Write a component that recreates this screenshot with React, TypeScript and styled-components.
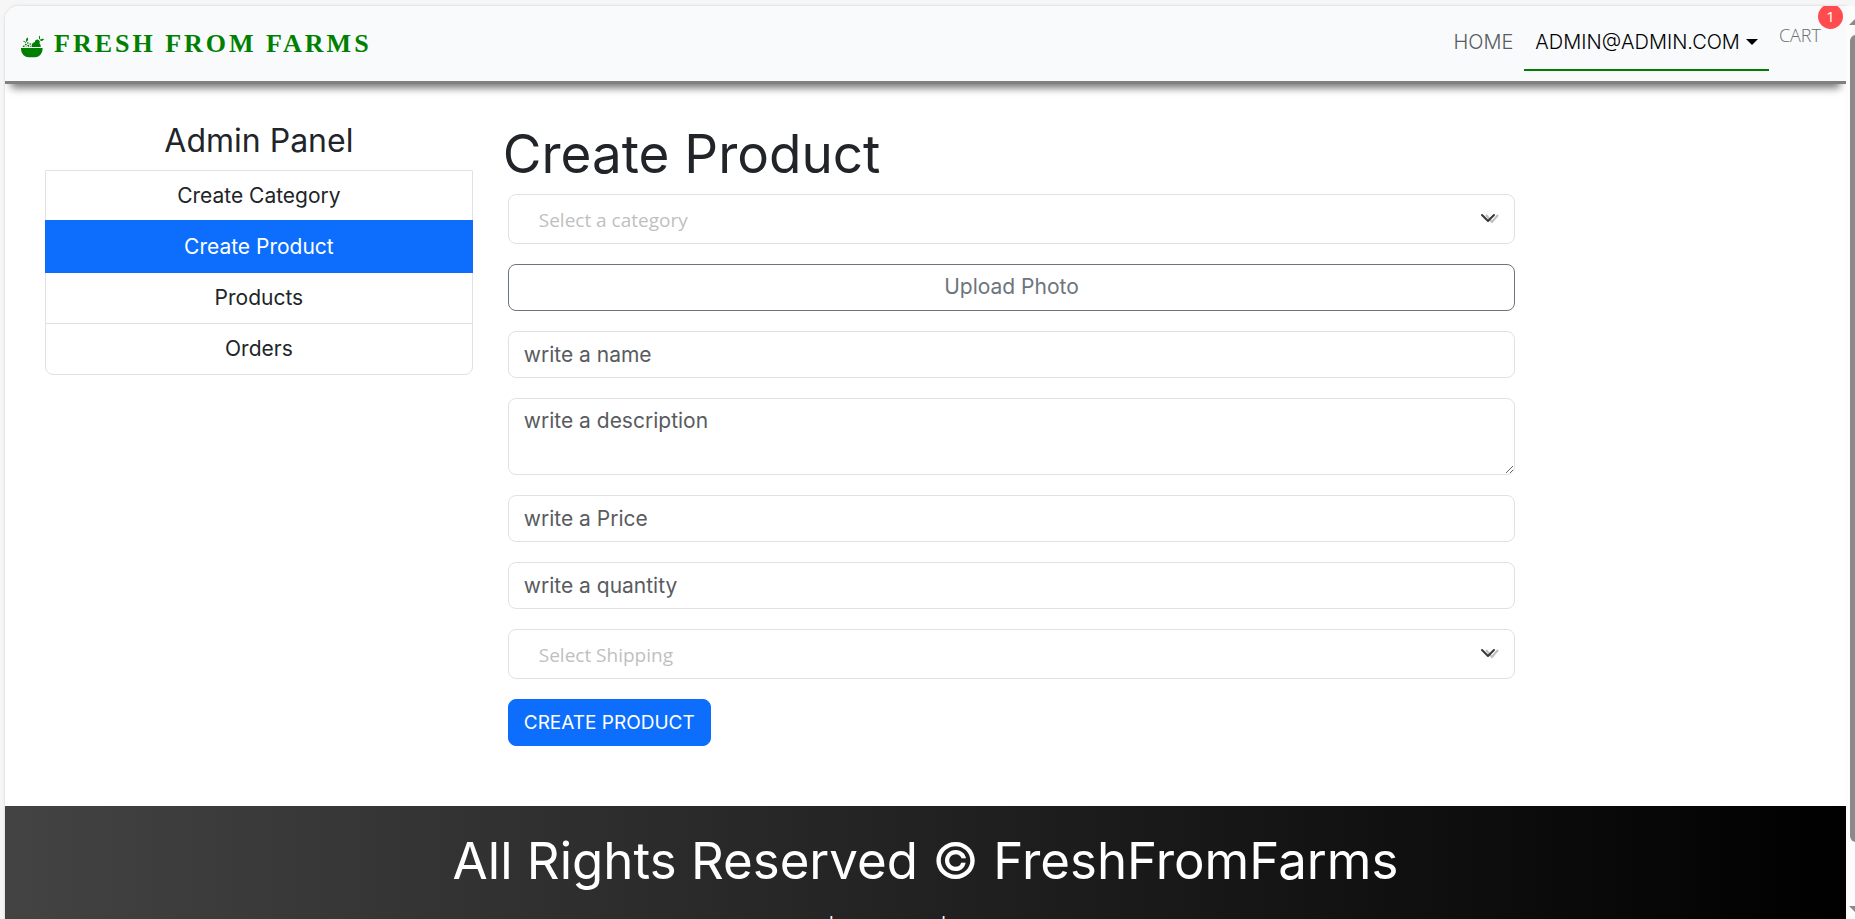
import React from 'react';
import styled, { createGlobalStyle } from 'styled-components';
import { GiFruitBowl } from 'react-icons/gi';

const GlobalStyle = createGlobalStyle`
  *, *::before, *::after { box-sizing: border-box; }
  html, body, #root { height: 100%; }
  body {
    margin: 0;
    overflow: hidden;
    background: #f6f6f6;
    color: #212529;
    font: 400 21px/30px Inter, "Open Sans", sans-serif;
  }
  h1, h4, p, ul { margin: 0; padding: 0; font-weight: 400; }
  a { color: inherit; text-decoration: none; }
`;

const Frame = styled.div`
  display: flex;
  height: 100%;
  padding: 6px 0 0 5px;
`;

const Viewport = styled.div`
  flex: 1;
  min-width: 0;
  overflow: hidden;
  background: #fff;
  border-radius: 14px 0 0 0;
  box-shadow: 0 0 2px 1px #e2e2e2;
`;

const ScrollTrack = styled.div`
  width: 9px;
  display: flex;
  flex-direction: column;
  overflow: hidden;
  background: #fcfcfc;
  position: relative;
`;

const ScrollArrow = styled.svg`
  display: block;
  width: 14px;
  height: 8px;
  margin: 12px 0 5px 3px;
  flex: none;
`;

const ScrollThumb = styled.div`
  flex: 0 0 calc(100% - 106px);
  width: 12px;
  margin: 4px 0 auto 4px;
  border-radius: 6px;
  background: #8a8a8a;
`;

const NavBar = styled.nav`
  display: flex;
  align-items: center;
  justify-content: space-between;
  height: 78px;
  padding: 0 25px 0 15px;
  background: #f8fafc;
  border-bottom: 3px solid #808080;
  box-shadow: 0 10px 8px -6px #777;
  position: relative;
`;

const Brand = styled.a`
  display: flex;
  align-items: center;
  gap: 9px;
  color: #008000;
  font: 700 26px/40px "Liberation Serif", serif;
  letter-spacing: 3px;
  & > svg { margin-top: 5px; }
`;

const NavLinks = styled.ul`
  display: flex;
  align-items: flex-start;
  height: 66px;
  list-style: none;
`;

const NavLink = styled.a<{ $active?: boolean }>`
  display: flex;
  align-items: center;
  gap: 6px;
  height: 60px;
  padding: 4px 11px 0;
  font-size: 20px;
  font-weight: 300;
  color: ${p => (p.$active ? '#000' : '#595b5d')};
  border-bottom: 2px solid ${p => (p.$active ? '#008000' : 'transparent')};
`;

const Caret = styled.span`
  border: 6px solid transparent;
  border-top-color: currentColor;
  border-bottom: 0;
`;

const CartLink = styled.a`
  display: block;
  position: relative;
  padding: 9px 0 0 10px;
  font: 300 18px/30px "Open Sans", sans-serif;
  color: #6c6e70;
`;

const CartBadge = styled.sup`
  position: absolute;
  top: -7px;
  right: -22px;
  width: 25px;
  height: 25px;
  border-radius: 50%;
  background: #ff4d4f;
  color: #fff;
  font: 400 15px/25px "Open Sans", sans-serif;
  text-align: center;
`;

const Main = styled.main`
  display: grid;
  grid-template-columns: 1fr 3fr;
  min-height: 722px;
  margin-right: -15px;
  padding: 38px 0 0 25px;
`;

const Side = styled.aside`
  padding: 0 15px;
  text-align: center;
`;

const PanelTitle = styled.h4`
  padding-bottom: 10px;
  font-size: 32px;
  line-height: 38px;
`;

const PanelList = styled.div`
  display: flex;
  flex-direction: column;
  border: 1px solid #dee2e6;
  border-radius: 0 0 8px 8px;
`;

const PanelItem = styled.a<{ $active?: boolean }>`
  padding: 10px 20px;
  border-top: 1px solid #dee2e6;
  &:first-child { border-top: 0; }
  ${p => p.$active && `
    margin: -1px -1px 0;
    padding: 11px 20px;
    border-color: #0d6efd;
    background: #0d6efd;
    color: #fff;
    & + a { border-top: 0; }
  `}
`;

const Content = styled.section`
  padding: 2px 15px 0;
`;

const Title = styled.h1`
  font-size: 53px;
  line-height: 60px;
  padding-bottom: 10px;
`;

const Form = styled.form`
  display: flex;
  flex-direction: column;
  align-items: flex-start;
  gap: 20px;
  width: 75%;
  margin-left: 5px;
`;

const SelectWrap = styled.div`
  display: grid;
  align-items: center;
  width: 100%;
  & > * { grid-area: 1 / 1; }
`;

const Select = styled.select`
  appearance: none;
  width: 100%;
  height: 50px;
  padding: 2px 44px 0 30px;
  border: 1px solid #dee2e6;
  border-radius: 8px;
  background: #fff;
  color: #bfbfbf;
  font: 400 19px/30px "Open Sans", sans-serif;
`;

const Chevron = styled.svg`
  justify-self: end;
  width: 20px;
  height: 14px;
  margin-right: 15px;
  pointer-events: none;
`;

const Input = styled.input`
  width: 100%;
  height: 47px;
  padding: 0 15px 1px;
  border: 1px solid #dee2e6;
  border-radius: 8px;
  background: #fff;
  font: inherit;
  &::placeholder { color: #595c5f; opacity: 1; }
`;

const TextArea = styled(Input).attrs({ as: 'textarea' })`
  display: block;
  height: 77px;
  padding: 7px 15px;
  resize: vertical;
`;

const UploadLabel = styled.label`
  display: block;
  width: 100%;
  height: 47px;
  padding: 7px 15px;
  border: 1px solid #6c757d;
  border-radius: 8px;
  color: #6c757d;
  text-align: center;
  cursor: pointer;
`;

const Submit = styled.button`
  height: 47px;
  padding: 0 15px;
  border: 1px solid #0d6efd;
  border-radius: 8px;
  background: #0d6efd;
  color: #fff;
  font: inherit;
  font-size: 19px;
`;

const Footer = styled.footer`
  padding: 25px 25px 40px;
  background: linear-gradient(90deg, #434343 0%, #000 100%);
  color: #fff;
  text-align: center;
`;

const FooterTitle = styled.h1`
  font-size: 51px;
  line-height: 60px;
`;

const FooterLinks = styled.p`
  padding-top: 22px;
  font-size: 20px;
  & > a { padding: 0 10px; }
`;

const SelectField = ({ label, name }: { label: string; name: string }) => (
  <SelectWrap>
    <Select name={name} aria-label={label} defaultValue="">
      <option value="">{label}</option>
    </Select>
    <Chevron viewBox="0 0 20 14" fill="none" aria-hidden="true">
      <path d="M6 3l6 7 6-7" stroke="#bfbfbf" strokeWidth="2" />
      <path d="M2 3l6 6 6-6" stroke="#343a40" strokeWidth="2" strokeLinecap="round" strokeLinejoin="round" />
    </Chevron>
  </SelectWrap>
);

const panelItems = ['Create Category', 'Create Product', 'Products', 'Orders'];

export default function App() {
  return (
    <>
      <GlobalStyle />
      <Frame>
        <Viewport>
          <NavBar>
            <Brand href="#"><GiFruitBowl size={25} />FRESH FROM FARMS</Brand>
            <NavLinks>
              <li><NavLink href="#">HOME</NavLink></li>
              <li><NavLink href="#" $active>ADMIN@ADMIN.COM<Caret /></NavLink></li>
              <li><CartLink href="#">CART<CartBadge>1</CartBadge></CartLink></li>
            </NavLinks>
          </NavBar>
          <Main>
            <Side>
              <PanelTitle>Admin Panel</PanelTitle>
              <PanelList>
                {panelItems.map(item => (
                  <PanelItem key={item} href="#" $active={item === 'Create Product'}>{item}</PanelItem>
                ))}
              </PanelList>
            </Side>
            <Content>
              <Title>Create Product</Title>
              <Form onSubmit={e => e.preventDefault()}>
                <SelectField label="Select a category" name="category" />
                <UploadLabel>Upload Photo<input type="file" name="photo" accept="image/*" hidden /></UploadLabel>
                <Input placeholder="write a name" aria-label="Name" />
                <TextArea placeholder="write a description" aria-label="Description" />
                <Input type="number" placeholder="write a Price" aria-label="Price" />
                <Input type="number" placeholder="write a quantity" aria-label="Quantity" />
                <SelectField label="Select Shipping" name="shipping" />
                <Submit type="submit">CREATE PRODUCT</Submit>
              </Form>
            </Content>
          </Main>
          <Footer>
            <FooterTitle>All Rights Reserved © FreshFromFarms</FooterTitle>
            <FooterLinks>
              <a href="#">About</a> | <a href="#">Contact</a> | <a href="#">Privacy Policy</a>
            </FooterLinks>
          </Footer>
        </Viewport>
        <ScrollTrack aria-hidden="true">
          <ScrollArrow viewBox="0 0 14 8"><path d="M0 7L7 0l7 7z" fill="#8a8a8a" /></ScrollArrow>
          <ScrollThumb />
          <ScrollArrow viewBox="0 0 14 8"><path d="M0 0l7 7 7-7z" fill="#8a8a8a" /></ScrollArrow>
        </ScrollTrack>
      </Frame>
    </>
  );
}
